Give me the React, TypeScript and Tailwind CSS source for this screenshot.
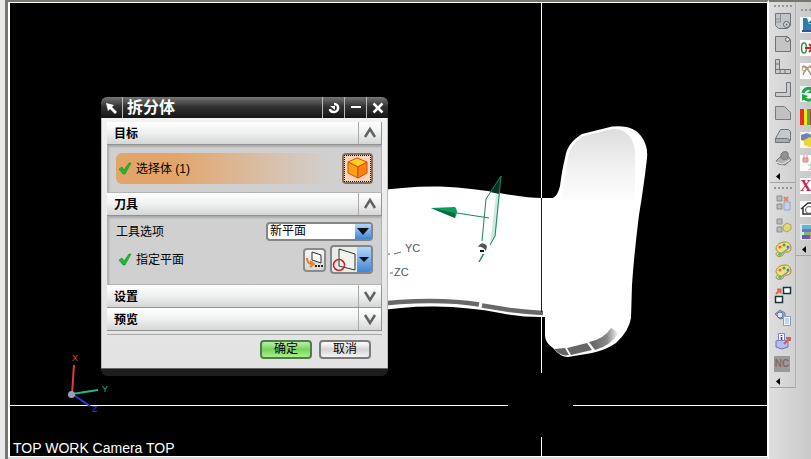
import { useState } from 'react';
import type { ReactNode } from 'react';
import clsx from 'clsx';

interface Tool {
  id: string;
  label: string;
  icon: ReactNode;
}

const Icon = ({ children }: { children: ReactNode }) => (
  <svg width="18" height="18" viewBox="0 0 18 18" fill="none" className="shrink-0">
    {children}
  </svg>
);

const PaletteIcon = () => (
  <Icon>
    <path d="M2 9c0-4 4-7 9-7 4 0 6 3 6 6s-2 4-4 4-3 1-4 3-7 2-7-1c0-1 1-1 2-2s-2-1-2-3z" fill="#f2e27a" stroke="#a08a30" />
    <circle cx="6" cy="7" r="1.6" fill="#e06a4a" />
    <circle cx="10" cy="5" r="1.6" fill="#46a55a" />
    <circle cx="14" cy="7" r="1.5" fill="#4a78d0" />
    <path d="M7 14L15 8" stroke="#7f97a8" strokeWidth="1.5" />
    <circle cx="6" cy="14" r="2" fill="#6fae86" />
  </Icon>
);

// Drafting view tools
const viewTools: Tool[] = [
  {
    id: 'base',
    label: '基本视图',
    icon: (
      <Icon>
        <path d="M1.5 1.5h15v12l-3 3h-9l-3-3z" fill="#c2c4c6" stroke="#6f7376" />
        <path d="M1.5 7h5V1.5M6.5 7v3M1.5 10h5" stroke="#8b8f92" />
        <circle cx="12.5" cy="12.5" r="3" fill="#d6d8da" stroke="#5e6265" />
        <circle cx="12.5" cy="12.5" r="1" fill="#5e6265" />
      </Icon>
    ),
  },
  {
    id: 'projected',
    label: '投影视图',
    icon: (
      <Icon>
        <path d="M1.5 1.5h12l3 3v12h-15z" fill="#c2c4c6" stroke="#6f7376" />
        <circle cx="13.5" cy="4.5" r="2" fill="#e2e2e2" stroke="#5e6265" />
      </Icon>
    ),
  },
  {
    id: 'flange',
    label: '弯边',
    icon: (
      <Icon>
        <path d="M1.5 1.5h4v10h11v4h-15z" fill="#c9cbcd" stroke="#6f7376" />
        <path d="M1.5 6h4M6 11.5v4M11 11.5v4M1.5 11.5h4" stroke="#6f7376" />
      </Icon>
    ),
  },
  {
    id: 'contour',
    label: '轮廓弯边',
    icon: (
      <Icon>
        <path d="M12.5 1.5h4v14h-15v-4h11z" fill="#c9cbcd" stroke="#6f7376" />
      </Icon>
    ),
  },
  {
    id: 'corner',
    label: '倒角',
    icon: (
      <Icon>
        <path d="M1.5 2.5h9l6 6v7h-15z" fill="#bfc1c3" stroke="#777b7e" />
      </Icon>
    ),
  },
  {
    id: 'wedge',
    label: '凸模',
    icon: (
      <Icon>
        <path d="M1.5 11.5l5-9h8l2 2v9h-15z" fill="#c6c8ca" stroke="#6f7376" />
        <path d="M1.5 11.5h12l3 2M1.5 11.5v4h14v-2" fill="#a9acae" stroke="#6f7376" />
      </Icon>
    ),
  },
  {
    id: 'dimple',
    label: '凹坑',
    icon: (
      <Icon>
        <path d="M2 11l4-4 8-1 3 4-6 5-7-1z" fill="#aeb1b3" stroke="#74787b" />
        <path d="M7 8V4c2-3 6-3 7-1v5c-2 2-5 2-7 0z" fill="#8f9395" stroke="#74787b" />
        <path d="M2 12l6 2 8-4" stroke="#e4e4e4" />
      </Icon>
    ),
  },
];

const utilityTools: Tool[] = [
  {
    id: 'assembly',
    label: '装配',
    icon: (
      <Icon>
        <path d="M3 2h5v5H3zM3 10h5v5H3z" fill="#b9bcbe" stroke="#8b8e90" />
        <path d="M10 8h6v8h-6z" fill="#c7d0ea" stroke="#9aa5c8" />
        <path d="M10 3l4 4M10 7l4-4" stroke="#d88a70" strokeWidth="2" />
      </Icon>
    ),
  },
  {
    id: 'parts',
    label: '部件',
    icon: (
      <Icon>
        <path d="M3 2h5v5H3zM3 10h5v5H3z" fill="#b9bcbe" stroke="#8b8e90" />
        <path d="M9 9l4-3 4 2v4l-4 3-4-2z" fill="#e6d778" stroke="#b1a14a" />
      </Icon>
    ),
  },
  { id: 'palette', label: '编辑对象显示', icon: <PaletteIcon /> },
  { id: 'palette-view', label: '可视化', icon: <PaletteIcon /> },
  {
    id: 'replace',
    label: '替换',
    icon: (
      <Icon>
        <path d="M9.5 1.5h7v6h-7zM1.5 10.5h7v6h-7z" fill="#fff" stroke="#17363c" strokeWidth="1.5" />
        <path d="M2 8l4-4M3 3.500h3.500v4" stroke="#d9694c" strokeWidth="2" />
      </Icon>
    ),
  },
  {
    id: 'inspect',
    label: '检查',
    icon: (
      <Icon>
        <path d="M1 5l5-4 5 3v5l-5 1z" fill="#a9b4d0" stroke="#6d7ba6" />
        <circle cx="6" cy="6" r="3" fill="#dfe7f7" stroke="#55689c" />
        <path d="M9.5 7.5h7v9h-7z" fill="#eef3fc" stroke="#8a9cc6" />
        <path d="M11 10h4M11 12h4M11 14h4" stroke="#9db0d8" />
      </Icon>
    ),
  },
  {
    id: 'info',
    label: '信息',
    icon: (
      <Icon>
        <path d="M2 9l5-2 7 2v6l-6 2-6-2z" fill="#b6bdf0" stroke="#6d72b4" />
        <path d="M4.5 1.5h6v7h-6z" fill="#f4f4ff" stroke="#7c80b8" />
        <path d="M7.5 3v1M7.5 5v3" stroke="#303a90" strokeWidth="1.5" />
        <path d="M10 12l5-5M12 6h4v3" stroke="#c85f64" strokeWidth="2" />
      </Icon>
    ),
  },
  {
    id: 'nc',
    label: 'NC',
    icon: (
      <span className="flex h-4 w-4 items-center justify-center bg-[#9a9a9a] text-[10px] font-bold text-[#806a6a]">
        NC
      </span>
    ),
  },
];

const sideTools: Tool[] = [
  {
    id: 'machine',
    label: '机床',
    icon: (
      <Icon>
        <path d="M0 1h18v16H0z" fill="#f4f8fb" />
        <path d="M3 2v12h14V9L9 8 7 2z" fill="#2f7fa8" />
        <path d="M2 14h12v2H2zM8 7l6-5v6z" fill="#3152a0" />
      </Icon>
    ),
  },
  {
    id: 'move',
    label: '移动',
    icon: (
      <Icon>
        <path d="M0 1h18v16H0z" fill="#fff" />
        <ellipse cx="4" cy="9" rx="2.5" ry="5" stroke="#35914a" strokeWidth="1.5" />
        <path d="M5 9h9M9 5l4 4-4 4" stroke="#c22828" strokeWidth="2" />
      </Icon>
    ),
  },
  {
    id: 'cut',
    label: '修剪',
    icon: (
      <Icon>
        <path d="M0 1h18v16H0z" fill="#fff" />
        <path d="M2 5c3-2 5 0 9 8M3 13c2-6 5-8 9-10" stroke="#a5948a" strokeWidth="1.5" />
        <path d="M8 4h6v5z" fill="#e5924f" />
        <circle cx="4" cy="7" r="2" stroke="#d48a48" />
      </Icon>
    ),
  },
  {
    id: 'refresh',
    label: '刷新',
    icon: (
      <Icon>
        <path d="M0 1h18v16H0z" fill="#e9f7ef" />
        <path d="M3 8c1-5 7-6 10-3M4 13c3 3 7 3 10-1" stroke="#27a34b" strokeWidth="3" />
        <path d="M7 8h7V2zM2 9v7l6-5z" fill="#27a34b" />
      </Icon>
    ),
  },
  {
    id: 'spectrum',
    label: '颜色',
    icon: (
      <Icon>
        <path d="M0 1h4v16H0z" fill="#e03024" />
        <path d="M4 1h3v16H4z" fill="#f5e91c" />
        <path d="M7 1h3v16H7z" fill="#3bb54a" />
        <path d="M10 1h8v16h-8z" fill="#e03024" />
      </Icon>
    ),
  },
  {
    id: 'solid',
    label: '实体',
    icon: (
      <Icon>
        <path d="M0 1h18v16H0z" fill="#f6f6e6" />
        <path d="M1 4l6-2 7 3v4l-5 2-8-2z" fill="#7080b8" />
        <path d="M4 9l6-3 6 3v5l-6 2-6-2z" fill="#ecd633" />
      </Icon>
    ),
  },
  {
    id: 'pattern',
    label: '阵列',
    icon: (
      <Icon>
        <path d="M0 1h18v16H0z" fill="#fbfbfb" />
        <path d="M3 4h5v4H3zM4 1v3M7 1v3" fill="#e8a7a7" stroke="#d98d8d" />
        <path d="M8 11h7M11 8v8M8 16l7-3" stroke="#b0c2b8" />
      </Icon>
    ),
  },
  {
    id: 'delete',
    label: 'X',
    icon: (
      <span className="flex h-4 w-4 items-center bg-white font-['Liberation_Serif',serif] text-base font-bold text-[#c4205a]">
        X
      </span>
    ),
  },
  {
    id: 'sketch',
    label: '草图',
    icon: (
      <Icon>
        <path d="M0 1h18v16H0z" fill="#fff" />
        <path d="M1 9l7-6h9M3 8v6h9" stroke="#333" strokeWidth="1.5" />
        <circle cx="9" cy="10" r="3.5" stroke="#555" />
      </Icon>
    ),
  },
  {
    id: 'render',
    label: '渲染',
    icon: (
      <Icon>
        <path d="M0 1h18v16H0z" fill="#dfe5ee" />
        <path d="M2 2h12v5H2z" fill="#63b5d4" />
        <path d="M2 6h12v3H2z" fill="#7a6fc4" />
        <path d="M4 9h10v3H4z" fill="#77bf68" />
        <path d="M2 12h8v4H2z" fill="#6a5bb0" />
        <path d="M10 11h6v5h-6z" fill="#d98b9c" />
      </Icon>
    ),
  },
];

const Grip = () => (
  <div className="flex h-1 justify-center gap-[2px]">
    {[0, 1, 2, 3, 4].map((n) => (
      <span key={n} className="h-[2px] w-[2px] bg-[#969696]" />
    ))}
  </div>
);

const MoreButton = () => (
  <button type="button" aria-label="更多" className="flex h-3 w-full items-center pl-[6px]">
    <svg width="4" height="7" viewBox="0 0 4 7">
      <path d="M4 0v7L0 3.5z" fill="#000" />
    </svg>
  </button>
);

const ToolBar = ({ tools, className }: { tools: Tool[]; className?: string }) => (
  <div role="toolbar" className={clsx('flex flex-col border-b border-[#a5a5a5]', className)}>
    <Grip />
    {tools.map((tool) => (
      <button
        key={tool.id}
        type="button"
        aria-label={tool.label}
        className="flex h-[23px] w-full items-center pl-1"
      >
        {tool.icon}
      </button>
    ))}
    <MoreButton />
  </div>
);

const Check = () => (
  <svg width="14" height="13" viewBox="0 0 14 13" className="shrink-0">
    <path d="M1 7l3-2 2 3 5-7 2 0-6 11H5z" fill="#22b835" stroke="#148a24" strokeWidth="0.6" />
  </svg>
);

const Chevron = ({ open }: { open: boolean }) => (
  <svg width="14" height="12" viewBox="0 0 14 12" fill="none">
    <path d={open ? 'M2 10L7 2l5 8' : 'M2 2l5 8 5-8'} stroke="#626262" strokeWidth="2.5" />
  </svg>
);

interface SectionProps {
  title: string;
  defaultOpen?: boolean;
  children?: ReactNode;
}

const Section = ({ title, defaultOpen = false, children }: SectionProps) => {
  const [open, setOpen] = useState(defaultOpen);

  return (
    <section>
      <button
        type="button"
        aria-expanded={open}
        onClick={() => setOpen(!open)}
        className="flex h-[23px] w-full border-r border-b border-[#929292] bg-linear-to-b from-white via-[#eff0f0] via-50% to-[#d5d7d7] text-left"
      >
        <span className="flex-1 pl-[7px] leading-[24px] font-bold">{title}</span>
        <span className="flex h-full w-[23px] items-center justify-center border-l border-[#aaa]">
          <Chevron open={open} />
        </span>
      </button>
      {open && children && (
        <div className="border-r border-b border-l border-[#b4b4b4] bg-[#d0d0d0] px-2 shadow-[inset_1px_2px_2px_#aaa]">
          {children}
        </div>
      )}
    </section>
  );
};

const Scene = () => (
  <svg className="absolute inset-0 h-full w-full" fill="none">
    <defs>
      <linearGradient id="shade" x1="0" y1="0" x2="0" y2="1">
        <stop offset="0" stopColor="#dedede" />
        <stop offset="0.5" stopColor="#f1f1f1" />
        <stop offset="1" stopColor="#fff" />
      </linearGradient>
      <linearGradient id="edge" x1="0" y1="0" x2="1" y2="0">
        <stop offset="0" stopColor="#606060" />
        <stop offset="0.6" stopColor="#888" />
        <stop offset="1" stopColor="#fff" />
      </linearGradient>
    </defs>
    <g transform="translate(-10 -3)">
      {/* crosshair */}
      <path d="M10 405.5H508M573 405.5H768M541.5 3V373M541.5 437V457" stroke="#fff" />

      {/* body */}
      <path
        d="M370 192Q405 186 440 186.500Q475 188 505 194Q530 198 541 198H553Q558 195 560 186Q562 170 565 158Q567 143 582 134Q598 130 612 126.500Q635 124 643 139Q648 147 647 158Q644 185 639 215Q634 255 632 285L631 318Q629 331 616 343Q606 350 592 353L568 357Q560 357 553 348Q545 343 545 335V317H541Q520 317 500 313Q470 307 435 306.500Q405 306 370 312z"
        fill="#fff"
      />
      <path
        d="M560 205Q564 185 568 157Q571 143 584 136L612 129Q631 128 635 150V205z"
        fill="url(#shade)"
      />
      <path
        d="M370 305Q400 301 430 301Q458 301 479 304.500M482 305.500L510 310Q526 312 543 313"
        stroke="#686868"
        strokeWidth="4.500"
      />
      <path d="M554 349L565 348 569 355Q561 357 554 349z" fill="#666" />
      <path d="M567 348L587 343 592 350 571 355z" fill="#666" />
      <path d="M589 342Q604 339 611 328L619 333Q610 346 595 350z" fill="url(#edge)" />
      <path d="M541.5 198V312" stroke="#222" />

      {/* datum plane */}
      <path d="M496 195L500 193 496 236 490 245z" fill="#c9eadc" />
      <path d="M490 192L501 176 499 194z" fill="#06351f" />
      <path d="M501 176L486 199 482 241M501 176L495 236 490 245M483 254L479 262 484 254" stroke="#168464" />
      <path d="M457 213L489 218" stroke="#168464" />
      <path d="M431 208L455 207Q459 211 455 218z" fill="#08a05c" />
      <path d="M431 208L455 213 455 218z" fill="#056d3c" />
      <path d="M478 247Q482 240 487 246L486 251Q482 246 478 247z" fill="#555" />
      <path d="M480 250h4v2h-4z" fill="#111" />

      {/* work axes */}
      <path d="M388 254h2M394 254L401 252M390 273h3" stroke="#666" />
      <g className="font-['Liberation_Sans',sans-serif] text-[11px]">
        <text x="405" y="252" fill="#555">YC</text>
        <text x="394" y="276" fill="#555">ZC</text>
        <text x="72" y="361" fill="#e04444" fontSize="9">X</text>
        <text x="102" y="392" fill="#26b586" fontSize="9">Y</text>
        <text x="92" y="412" fill="#3b3bd8" fontSize="9">Z</text>
      </g>

      {/* view triad */}
      <path d="M72 394L74 365" stroke="#e23c3c" strokeWidth="2" />
      <path d="M72 394L98 390" stroke="#26b586" strokeWidth="2" />
      <path d="M72 394L90 406" stroke="#3434dc" strokeWidth="2" />
      <circle cx="71.5" cy="394.5" r="3.5" fill="#98a2ae" />
    </g>
  </svg>
);

const titleButton = 'flex h-full w-[22px] items-center justify-center border-l border-[#b8b8b8]';

const SplitBodyDialog = () => {
  const [tool, setTool] = useState('new');

  return (
    <div
      role="dialog"
      aria-labelledby="dialog-title"
      className="absolute top-[94px] left-[91px] w-[287px] text-black"
    >
      {/* title bar */}
      <header className="flex h-[21px] items-center overflow-hidden rounded-t-md bg-linear-to-b from-[#777] via-[#333] via-45% to-[#151515] text-white">
        <svg width="21" height="16" viewBox="0 0 21 16">
          <path d="M5 3l8 2-2 2 5 5-2 2-5-5-2 2z" fill="#fff" />
        </svg>
        <h1
          id="dialog-title"
          className="flex-1 border-l border-[#b8b8b8] pl-1 text-base leading-[21px] font-bold"
        >
          拆分体
        </h1>
        <button type="button" aria-label="重置" className={titleButton}>
          <svg width="14" height="14" viewBox="0 0 14 14" fill="none">
            <path d="M7 3c6 0 5 8 0 8-2 0-4-1-4-3" stroke="#fff" strokeWidth="2.5" />
            <path d="M3 5h5v4z" fill="#fff" />
          </svg>
        </button>
        <button type="button" aria-label="最小化" className={titleButton}>
          <svg width="12" height="12" viewBox="0 0 12 12">
            <path d="M1 4h10v2H1z" fill="#fff" />
          </svg>
        </button>
        <button type="button" aria-label="关闭" className={titleButton}>
          <svg width="12" height="12" viewBox="0 0 12 12">
            <path d="M1.5 1.5l9 9M10.5 1.5l-9 9" stroke="#fff" strokeWidth="2.5" />
          </svg>
        </button>
      </header>

      <div className="border-x border-[#bbb] bg-linear-to-b from-[#f2f2f2] to-[#e2e2e2] px-[5px] pt-1 pb-[9px] text-xs">
        <Section title="目标" defaultOpen>
          <div className="flex h-[47px] items-center">
            <div className="flex h-[31px] flex-1 items-center gap-1 rounded-l-md bg-linear-to-r from-[#e2a468] from-25% to-[#d0d0d0] to-95% pl-[2px]">
              <Check />
              <span>选择体 (1)</span>
            </div>
            <button
              type="button"
              aria-label="选择体"
              className="flex h-[31px] w-[31px] items-center justify-center rounded-sm border-2 border-[#85715f] bg-[#fbd5b5]"
            >
              <span className="flex h-[27px] w-[27px] items-center justify-center border border-dotted border-black">
                <svg width="23" height="23" viewBox="0 0 23 23" stroke="#d9480c" strokeLinejoin="round">
                  <path d="M11 1l10 4-9 5L2 5z" fill="#ffd21c" />
                  <path d="M2 5l10 5v11L2 16z" fill="#ffa010" />
                  <path d="M12 10l9-5v11l-9 5z" fill="#fb8410" />
                </svg>
              </span>
            </button>
          </div>
        </Section>

        <Section title="刀具" defaultOpen>
          <div className="flex h-[68px] flex-col gap-1 pt-[6px]">
            <div className="flex items-center justify-between">
              <label htmlFor="tool-option">工具选项</label>
              <span className="relative">
                <select
                  id="tool-option"
                  value={tool}
                  onChange={(e) => setTool(e.target.value)}
                  className="block h-[19px] w-[107px] appearance-none rounded-sm border-2 border-[#858585] bg-white pl-[2px] text-[12px] leading-[15px]"
                >
                  <option value="new">新平面</option>
                  <option value="face">面或平面</option>
                  <option value="extrude">拉伸</option>
                  <option value="revolve">旋转</option>
                </select>
                <span className="pointer-events-none absolute inset-y-[2px] right-[2px] flex w-4 items-center justify-center bg-linear-to-b from-[#b4d7fa] to-[#3d86d6]">
                  <svg width="12" height="8" viewBox="0 0 12 8">
                    <path d="M0 0h12L6 7z" fill="#111" />
                  </svg>
                </span>
              </span>
            </div>

            <div className="flex items-center">
              <span className="flex flex-1 items-center gap-1 pl-[2px]">
                <Check />
                指定平面
              </span>
              <button
                type="button"
                aria-label="平面对话框"
                className="mr-1 flex h-6 w-[23px] items-center justify-center rounded-sm border-2 border-[#8b8b8b] bg-linear-to-b from-[#f6f6f6] to-[#d7d7d7]"
              >
                <svg width="19" height="19" viewBox="0 0 19 19" fill="none">
                  <path d="M7 2l9 3v8l-9-3z" fill="#f7f7f7" stroke="#333" />
                  <path d="M2 8c0 4 2 6 5 6M5 11l4 3-4 3" stroke="#ee7c1c" strokeWidth="2" />
                  <path d="M10 15h2v2h-2zM13 15h2v2h-2zM16 15h2v2h-2z" fill="#222" />
                </svg>
              </button>
              <button
                type="button"
                aria-label="自动判断"
                className="flex h-[29px] w-[43px] overflow-hidden rounded-sm border-2 border-[#858585] bg-[#e9ece8]"
              >
                <svg width="25" height="25" viewBox="0 0 25 25" fill="none" className="shrink-0">
                  <path d="M7 2l16 5v16L7 19z" fill="#eef6ea" stroke="#333" />
                  <circle cx="7" cy="18" r="5.5" stroke="#d21e2c" strokeWidth="1.5" />
                </svg>
                <span className="flex h-full flex-1 items-center justify-center bg-linear-to-b from-[#b4d7fa] to-[#3d86d6]">
                  <svg width="10" height="6" viewBox="0 0 10 6">
                    <path d="M0 0h10L5 5z" fill="#111" />
                  </svg>
                </span>
              </button>
            </div>
          </div>
        </Section>

        <Section title="设置" />
        <Section title="预览" />

        {/* actions */}
        <div className="mt-[3px] flex justify-end gap-[7px] border-t border-[#aaa] pt-[5px] pr-[11px]">
          <button
            type="button"
            className="h-[19px] w-[52px] rounded-sm border-2 border-[#4d7c4d] bg-linear-to-b from-[#b9eeaa] via-[#75d45a] via-50% to-[#aaf088] leading-[15px]"
          >
            确定
          </button>
          <button
            type="button"
            className="h-[19px] w-[52px] rounded-sm border-2 border-[#7b7b7b] bg-linear-to-b from-white via-[#d4d4d4] via-50% to-[#f4f4f4] leading-[15px]"
          >
            取消
          </button>
        </div>
      </div>
      <footer className="h-2 rounded-b-md border-t border-[#666] bg-[#1d1d1d]" />
    </div>
  );
};

export default function App() {
  return (
    <div className="flex h-screen overflow-hidden bg-[#cdcdcd] font-['Liberation_Sans','Noto_Sans_CJK_SC',sans-serif]">
      <div className="w-2 shrink-0 border-r-3 border-[#77776f] bg-[#e9e9e9]" />

      <main className="flex min-w-0 flex-1 flex-col border-t-2 border-r-2 border-b-2 border-t-[#77776f] border-r-white border-b-[#ddd]">
        <div className="relative flex-1 overflow-hidden border-t border-l-2 border-b border-white bg-black">
          <Scene />
          <p className="absolute bottom-0 left-[3px] text-sm leading-4 text-white">
            TOP WORK Camera TOP
          </p>
          <SplitBodyDialog />
        </div>
      </main>

      {/* toolbars */}
      <aside className="flex w-[42px] shrink-0 items-start overflow-hidden border-t-2 border-[#77776f] bg-linear-to-r from-[#dedede] to-[#c9c9c9] pl-[1px]">
        <div className="w-[26px] shrink-0 border-r border-[#b0b0b0] pt-[3px]">
          <ToolBar tools={viewTools} />
          <ToolBar tools={utilityTools} className="pt-1" />
        </div>
        <ToolBar tools={sideTools} className="w-7 shrink-0 pt-[7px]" />
      </aside>
    </div>
  );
}
